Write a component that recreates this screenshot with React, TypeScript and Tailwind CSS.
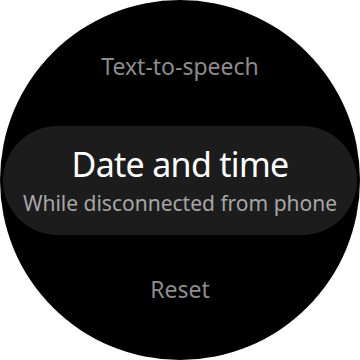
export default function App() {
  return (
    <div className="w-[360px] h-[360px] bg-white">
      <div
        className="w-[360px] h-[360px] rounded-full bg-black overflow-hidden flex flex-col items-center"
        style={{ fontFamily: '"Noto Sans", sans-serif' }}
      >
        <p className="mt-[51px] h-[30px] leading-[30px] text-[23px] text-[#8c8c8c]">
          Text-to-speech
        </p>
        <div className="mt-[45px] w-[354px] h-[109px] rounded-full bg-[#1c1c1c] flex flex-col items-center justify-center">
          <p className="leading-[38px] text-[34px] tracking-[-0.7px] text-white">
            Date and time
          </p>
          <p className="mt-[7px] leading-[26px] text-[21px] text-[#a6a6a6]">
            While disconnected from phone
          </p>
        </div>
        <p className="mt-[39px] h-[30px] leading-[30px] text-[23px] text-[#8c8c8c]">
          Reset
        </p>
      </div>
    </div>
  );
}
